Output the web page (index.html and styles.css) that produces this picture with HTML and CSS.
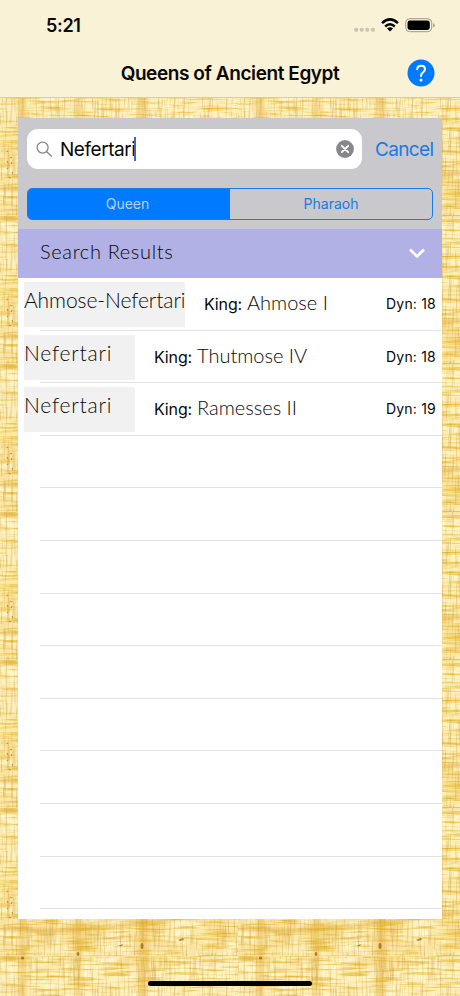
FILE: index.html
```html
<!DOCTYPE html>
<html lang="en">
<head>
<meta charset="utf-8">
<title>Queens of Ancient Egypt</title>
<link rel="stylesheet" href="styles.css">
</head>
<body>
<svg class="papyrus" width="460" height="996" aria-hidden="true">
  <defs>
    <filter id="warp" x="0" y="0" width="100%" height="100%" color-interpolation-filters="sRGB">
      <feTurbulence type="fractalNoise" baseFrequency="0.5 0.035" numOctaves="3" seed="4"/>
      <feColorMatrix values="0 0 0 0 0.76  0 0 0 0 0.56  0 0 0 0 0.16  2 0 0 0 -0.92"/>
    </filter>
    <filter id="weft" x="0" y="0" width="100%" height="100%" color-interpolation-filters="sRGB">
      <feTurbulence type="fractalNoise" baseFrequency="0.03 0.4" numOctaves="3" seed="9"/>
      <feColorMatrix values="0 0 0 0 0.9  0 0 0 0 0.7  0 0 0 0 0.14  2.2 0 0 0 -1.02"/>
    </filter>
    <filter id="light" x="0" y="0" width="100%" height="100%" color-interpolation-filters="sRGB">
      <feTurbulence type="fractalNoise" baseFrequency="0.03 0.06" numOctaves="3" seed="12"/>
      <feColorMatrix values="0 0 0 0 1  0 0 0 0 0.97  0 0 0 0 0.8  3.5 0 0 0 -1.4"/>
    </filter>
    <filter id="soft" x="-50%" y="-10%" width="200%" height="120%"><feGaussianBlur stdDeviation="2.2 1.5"/></filter>
    <linearGradient id="tone" x2="0" y2="1">
      <stop offset="0" stop-color="#f8de93"/><stop offset=".12" stop-color="#fff2c0"/>
      <stop offset=".4" stop-color="#fdecb0"/><stop offset=".62" stop-color="#fbe49c"/>
      <stop offset=".85" stop-color="#f9e29a"/><stop offset="1" stop-color="#fceab0"/>
    </linearGradient>
    <pattern id="sheet" width="238" height="148" y="68" patternUnits="userSpaceOnUse">
      <rect width="238" height="148" fill="url(#tone)"/>
      <rect width="238" height="148" filter="url(#light)"/>
      <g filter="url(#soft)" fill="#d99a1c">
        <rect x="19" width="7" height="148" opacity=".4"/>
        <rect x="75" width="6" height="148" opacity=".36"/>
        <rect x="139" width="8" height="148" opacity=".4"/>
        <path d="M0 118L60 121L110 116L150 113L185 105L238 102V106L185 110L150 117L110 120L60 125L0 123Z" opacity=".4"/>
        <rect y="0" width="16" height="4" opacity=".6"/>
      </g>
      <rect width="238" height="148" filter="url(#weft)"/>
      <rect width="238" height="148" filter="url(#warp)" opacity=".55"/>
      <g fill="#a85c12" opacity=".75">
        <ellipse cx="22.500" cy="2" rx="1.800" ry="1.500"/>
        <ellipse cx="78" cy="146" rx="1.500" ry="2"/><ellipse cx="142" cy="138" rx="1.500" ry="3"/>
        <path d="M178 132l5-2 1 2-4 1zM118 138l5-2-1 2z"/>
      </g>
      <path d="M7 83l1 1m2 5l2 1m-5 3l1 2m4-1l-1 2m-4 4l1 1m4 3l1 2m-4 3l2 1" stroke="#a27a36" stroke-width="1.200" opacity=".7"/>
    </pattern>
  </defs>
  <rect width="460" height="996" fill="url(#sheet)"/>
</svg>
<div class="screen">
  <header class="top">
    <div class="status">
      <span class="time">5:21</span>
      <svg class="indicators" width="82" height="18" viewBox="0 0 82 18" aria-hidden="true">
        <g fill="#cbc5ae"><circle cx="2.200" cy="12.800" r="2.100"/><circle cx="7.800" cy="12.800" r="2.100"/><circle cx="13.300" cy="12.800" r="2.100"/><circle cx="18.900" cy="12.800" r="2.100"/></g>
        <g fill="none" stroke="#000" stroke-width="2.500"><path d="M28.100 6.100Q36 -1.300 43.900 6.100"/><path d="M31.200 9.500Q36 5.100 40.800 9.500"/></g>
        <path d="M33 11.600Q36 9.100 39 11.600L36 14.500Z"/>
        <rect x="51.700" y="1.700" width="26" height="13" rx="4" fill="none" stroke="#9d9985"/>
        <rect x="53.500" y="3.500" width="22.300" height="9.400" rx="2.400"/>
        <path d="M79.200 6V10.500Q82.300 8.200 79.200 6" fill="#9d9985"/>
      </svg>
    </div>
    <div class="nav">
      <h1>Queens of Ancient Egypt</h1>
      <svg class="help" width="28" height="28" viewBox="0 0 28 28" role="img" aria-label="Help">
        <circle cx="14" cy="14" r="13.500" fill="#007aff"/>
        <path d="M10.200 10.300C10.500 5.700 18 5.700 18 10.300C18 13.300 14 13.500 14 17" fill="none" stroke="#fff" stroke-width="2" stroke-linecap="round"/>
        <circle cx="14" cy="21" r="1.500" fill="#fff"/>
      </svg>
    </div>
  </header>
  <main class="panel">
    <section class="search">
      <div class="searchrow">
        <div class="field">
          <svg width="17" height="17" viewBox="0 0 17 17" fill="none" stroke="#85858a" stroke-width="1.300" stroke-linecap="round" aria-hidden="true"><circle cx="6.600" cy="6.600" r="5.500"/><path d="M10.700 10.700L15.500 15.300"/></svg>
          <span class="query">Nefertari</span><span class="caret"></span>
          <svg class="clear" width="18" height="18" viewBox="0 0 18 18" aria-hidden="true"><circle cx="9" cy="9" r="8.900" fill="#87878b"/><path d="M5.800 5.800L12.200 12.200M12.200 5.800L5.800 12.200" stroke="#fff" stroke-width="1.900" stroke-linecap="round"/></svg>
        </div>
        <span class="cancel">Cancel</span>
      </div>
      <div class="segments"><span class="seg on">Queen</span><span class="seg">Pharaoh</span></div>
    </section>
    <div class="results"><span class="script heading">Search Results</span>
      <svg width="16" height="11" viewBox="0 0 16 11" fill="none" stroke="#fff" stroke-width="2.600" aria-hidden="true"><path d="M1 1.500L8 8.500L15 1.500"/></svg>
    </div>
    <div class="list">
      <div class="row"><div class="queen wide"><span class="script">Ahmose-Nefertari</span></div><span class="king">King:</span><span class="script name">Ahmose I</span><span class="dyn">Dyn: 18</span></div>
      <div class="row"><div class="queen"><span class="script">Nefertari</span></div><span class="king">King:</span><span class="script name">Thutmose IV</span><span class="dyn">Dyn: 18</span></div>
      <div class="row"><div class="queen"><span class="script">Nefertari</span></div><span class="king">King:</span><span class="script name">Ramesses II</span><span class="dyn">Dyn: 19</span></div>
      <div class="row"></div><div class="row"></div><div class="row"></div><div class="row"></div><div class="row"></div><div class="row"></div><div class="row"></div><div class="row"></div><div class="row"></div>
    </div>
  </main>
  <div class="home"></div>
</div>
</body>
</html>
```
FILE: styles.css
```css
* { box-sizing: border-box; }
body { margin: 0; width: 460px; height: 996px; overflow: hidden; background: #f8df96; font-family: Inter, "Liberation Sans", sans-serif; color: #080808; }
.papyrus { position: absolute; inset: 0; }
.screen { position: relative; height: 996px; display: flex; flex-direction: column; align-items: center; }
.top { width: 460px; height: 98px; flex: none; background: #f9f2d7; border-bottom: 1px solid #d5ccab; }
.status { height: 49px; padding: 2px 24px 0 46px; display: flex; align-items: center; justify-content: space-between; }
.time { font-size: 18px; font-weight: 600; letter-spacing: -0.3px; }
.indicators { margin-top: 0; }
.nav { height: 49px; display: grid; grid-template-columns: 60px 1fr 60px; align-items: center; }
.nav h1 { grid-column: 2; margin: 0; text-align: center; font-size: 19px; font-weight: 600; letter-spacing: -0.42px; white-space: nowrap; }
.help { margin: -1px 0 0 7px; }
.panel { width: 424px; height: 801px; flex: none; margin-top: 20px; background: #fff; overflow: hidden; }
.search { height: 111px; background: #c9c8cd; padding: 11px 9px 0; }
.searchrow { display: flex; align-items: center; }
.field { width: 335px; height: 40px; flex: none; background: #fff; border-radius: 11px; display: flex; align-items: center; padding: 0 8px 0 9px; }
.query { font-size: 19px; margin-left: 7px; letter-spacing: -0.45px; }
.caret { width: 2px; height: 24px; flex: none; margin-left: -1px; background: #3c63e0; }
.clear { margin-left: auto; }
.cancel { color: #187ae5; font-size: 19px; letter-spacing: -0.65px; margin-left: 13px; }
.segments { display: grid; grid-template-columns: 1fr 1fr; height: 32px; width: 406px; margin-top: 19px; border: 1px solid #187ae5; border-radius: 5px; overflow: hidden; }
.seg { display: flex; align-items: center; justify-content: center; color: #187ae5; font-size: 14px; padding-bottom: 1px; }
.seg.on { background: #007aff; color: #b9d0ec; padding-right: 3px; }
.results { height: 49px; background: #b2b1e5; padding: 0 17px 0 22px; display: flex; align-items: center; justify-content: space-between; }
.script { font-family: Lato, "Open Sans", sans-serif; font-weight: 300; font-size: 20px; white-space: nowrap; }
.heading { margin-top: -6px; letter-spacing: 0.65px; }
.row { height: 52.600px; display: flex; align-items: flex-start; padding: 4px 6px 0; background: linear-gradient(#e3e3e5, #e3e3e5) 22px 100% / 402px 1px no-repeat; }
.queen { width: 111px; height: 45px; background: #f1f1f1; padding-top: 6px; line-height: 24px; flex: none; }
.queen .script { font-size: 21px; letter-spacing: 0.8px; }
.queen.wide { width: 161px; }
.queen.wide .script { letter-spacing: -0.07px; }
.king { margin: 12px 0 0 19px; font-size: 16px; line-height: 20px; width: 43px; letter-spacing: -0.15px; flex: none; }
.name { line-height: 24px; margin-top: 8px; }
.dyn { margin: 12px 0 0 auto; font-size: 14px; line-height: 20px; letter-spacing: 0.2px; white-space: nowrap; }
.home { width: 164px; height: 5px; border-radius: 3px; background: #000; margin-top: 62px; flex: none; }
```
